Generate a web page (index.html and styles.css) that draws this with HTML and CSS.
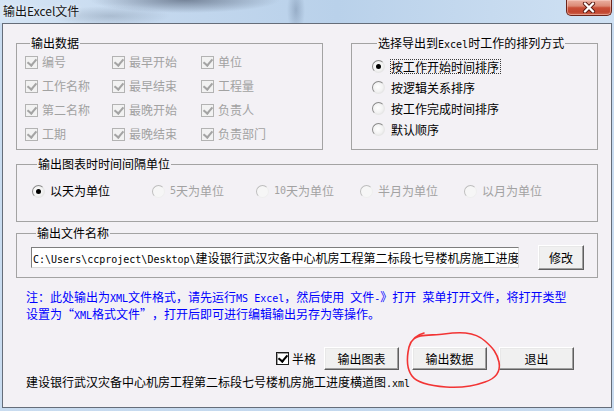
FILE: index.html
```html
<!DOCTYPE html>
<html lang="zh-CN">
<head>
<meta charset="utf-8">
<title>输出Excel文件</title>
<link rel="stylesheet" href="styles.css">
</head>
<body>
<div class="window">
  <div class="titlebar">
    <span class="title">输出Excel文件</span>
    <div class="close">
      <svg width="16" height="11" viewBox="0 0 16 11">
        <path d="M4 1.5 L12 9.5 M12 1.5 L4 9.5" stroke="#5a1a12" stroke-width="4.2" stroke-linecap="round"/>
        <path d="M4 1.5 L12 9.5 M12 1.5 L4 9.5" stroke="#ffffff" stroke-width="2.4" stroke-linecap="round"/>
      </svg>
    </div>
  </div>
  <div class="client">
    <div class="top-row">
      <fieldset class="grp grp-data">
        <legend>输出数据</legend>
        <div class="check-grid">
          <label class="item off"><span class="cb"></span>编号</label>
          <label class="item off"><span class="cb"></span>最早开始</label>
          <label class="item off"><span class="cb"></span>单位</label>
          <label class="item off"><span class="cb"></span>工作名称</label>
          <label class="item off"><span class="cb"></span>最早结束</label>
          <label class="item off"><span class="cb"></span>工程量</label>
          <label class="item off"><span class="cb"></span>第二名称</label>
          <label class="item off"><span class="cb"></span>最晚开始</label>
          <label class="item off"><span class="cb"></span>负责人</label>
          <label class="item off"><span class="cb"></span>工期</label>
          <label class="item off"><span class="cb"></span>最晚结束</label>
          <label class="item off"><span class="cb"></span>负责部门</label>
        </div>
      </fieldset>
      <fieldset class="grp grp-sort">
        <legend>选择导出到<span class="en">Excel</span>时工作的排列方式</legend>
        <div class="radio-list">
          <label class="item"><span class="rd sel"></span><span class="lbl focus">按工作开始时间排序</span></label>
          <label class="item"><span class="rd"></span><span class="lbl">按逻辑关系排序</span></label>
          <label class="item"><span class="rd"></span><span class="lbl">按工作完成时间排序</span></label>
          <label class="item"><span class="rd"></span><span class="lbl">默认顺序</span></label>
        </div>
      </fieldset>
    </div>
    <fieldset class="grp grp-unit">
      <legend>输出图表时时间间隔单位</legend>
      <div class="radio-row">
        <label class="item first"><span class="rd sel"></span>以天为单位</label>
        <label class="item off"><span class="rd"></span><span class="en">5</span>天为单位</label>
        <label class="item off"><span class="rd"></span><span class="en">10</span>天为单位</label>
        <label class="item off"><span class="rd"></span>半月为单位</label>
        <label class="item off"><span class="rd"></span>以月为单位</label>
      </div>
    </fieldset>
    <fieldset class="grp grp-file">
      <legend>输出文件名称</legend>
      <div class="file-row">
        <div class="edit"><span class="en">C:\Users\ccproject\Desktop\</span>建设银行武汉灾备中心机房工程第二标段七号楼机房施工进度</div>
        <button class="btn btn-small">修改</button>
      </div>
    </fieldset>
    <p class="note">注：此处输出为<span class="en">XML</span>文件格式，请先运行<span class="en">MS Excel</span>，然后使用<span class="en"> </span>文件<span class="en">-</span>》打开<span class="en"> </span>菜单打开文件，将打开类型<br>设置为<span class="q ql">“</span><span class="en">XML</span>格式文件<span class="q qr">”</span>，打开后即可进行编辑输出另存为等操作。</p>
    <div class="actions">
      <label class="item half"><span class="cb on"></span>半格</label>
      <button class="btn btn-chart">输出图表</button>
      <button class="btn btn-data">输出数据</button>
      <button class="btn btn-exit">退出</button>
    </div>
    <div class="filename">建设银行武汉灾备中心机房工程第二标段七号楼机房施工进度横道图<span class="en">.xml</span></div>
  </div>
  <svg class="annot" width="614" height="411" viewBox="0 0 614 411">
    <path d="M412 341 C418 333, 432 336, 444 334 C458 332, 474 331, 485 341 C493 348, 497 353, 499 362 C501 373, 494 379, 485 382 C474 386, 460 388, 446 387 C432 386, 418 384, 412 376 C406 368, 407 356, 409 347 C411 340, 416 335, 424 333"
      fill="none" stroke="#f23434" stroke-width="1.6" stroke-linecap="round"/>
  </svg>
</div>
</body>
</html>
```

FILE: styles.css
```css
* { box-sizing: border-box; }
html, body { margin: 0; padding: 0; }
body {
  width: 614px;
  height: 411px;
  overflow: hidden;
  font-family: "Noto Sans CJK SC", "Noto Sans", sans-serif;
  font-size: 12px;
  color: #000;
}
.window {
  position: relative;
  width: 614px;
  height: 411px;
  display: flex;
  flex-direction: column;
  background: linear-gradient(90deg, #c9dcf0 0, #c3d8ee 50%, #c9dcf0 100%);
}
.titlebar {
  height: 23px;
  flex: none;
  display: flex;
  justify-content: space-between;
  align-items: flex-start;
  background:
    radial-gradient(ellipse 95px 13px at 185px 0px, rgba(55, 65, 85, 0.55), rgba(55, 65, 85, 0) 100%),
    radial-gradient(ellipse 9px 24px at 296px 10px, rgba(70, 90, 120, 0.3), rgba(70, 90, 120, 0) 100%),
    radial-gradient(ellipse 60px 10px at 110px 16px, rgba(80, 95, 115, 0.25), rgba(80, 95, 115, 0) 100%),
    linear-gradient(90deg, #d5e5f5 0, #c4d8ee 25%, #b9d1ea 55%, #c6daef 80%, #cfe1f3 100%);
}
.title {
  padding-left: 3px;
  line-height: 21px;
  font-size: 12px;
  color: #151515;
  text-shadow: 0 0 5px rgba(255, 255, 255, 0.9);
}
.close {
  width: 46px;
  height: 16px;
  margin-right: 2px;
  border: 1px solid #6b2419;
  border-top: none;
  border-radius: 0 0 5px 5px;
  background: linear-gradient(#eab0a2 0, #dc8a76 40%, #c94f38 52%, #c2452f 80%, #d06a52 100%);
  box-shadow: inset 0 0 0 1px rgba(255, 220, 210, 0.45);
  display: flex;
  align-items: center;
  justify-content: center;
}
.client {
  margin-left: 2px;
  width: 610px;
  height: 385px;
  border: 1px solid #656d79;
  background: #f3f1f5;
  padding: 12px 13px 0 13px;
  display: flex;
  flex-direction: column;
}
.top-row {
  display: flex;
  gap: 28px;
}
.grp {
  margin: 0;
  padding: 0;
  border: 1px solid #a3a3a3;
  min-width: 0;
}
.grp legend {
  margin-left: 5px;
  padding: 0 1px;
  height: 14px;
  line-height: 14px;
  font-size: 12px;
  white-space: nowrap;
}
.en {
  font-family: "DejaVu Sans Mono", "Liberation Mono", monospace;
  font-size: 10px;
}
.item {
  display: flex;
  align-items: center;
  white-space: nowrap;
  line-height: 14px;
}
.item.off { color: #a2a2a2; }

/* checkboxes */
.cb {
  position: relative;
  flex: none;
  width: 13px;
  height: 13px;
  margin-right: 4px;
  border: 1px solid #8e8f8f;
  background: linear-gradient(135deg, #dedede, #fbfbfb);
  color: #000;
}
.cb::after {
  content: "";
  position: absolute;
  left: 3px;
  top: 0px;
  width: 4px;
  height: 7px;
  border: solid currentColor;
  border-width: 0 2px 2px 0;
  transform: rotate(40deg);
}
.off .cb {
  border-color: #b3b3b3;
  background: #f2f2f2;
  color: #a4a4a4;
}
.cb.on {
  border-color: #1c1c1c;
  background: #fff;
  box-shadow: inset 1px 1px 0 #a0a0a0;
}

/* radios */
.rd {
  position: relative;
  flex: none;
  width: 13px;
  height: 13px;
  margin-right: 5px;
  border-radius: 50%;
  border: 1px solid #8a8a8a;
  border-bottom-color: #e6e6e6;
  border-right-color: #e6e6e6;
  background: radial-gradient(circle at 45% 45%, #ffffff 0, #f2f2f2 55%, #dcdcdc 100%);
}
.rd.sel::after {
  content: "";
  position: absolute;
  left: 3px;
  top: 3px;
  width: 5px;
  height: 5px;
  border-radius: 50%;
  background: #000;
}
.off .rd {
  border-color: #bdbdbd #eeeeee #eeeeee #bdbdbd;
  background: #f6f6f6;
}

/* group 1 */
.grp-data {
  width: 307px;
  height: 114px;
  padding: 0 0 3px 8px;
}
.check-grid {
  display: grid;
  grid-template-columns: 87px 89px 1fr;
  grid-auto-rows: 24px;
}

/* group 2 */
.grp-sort {
  width: 247px;
  height: 114px;
  padding: 6px 0 9px 20px;
}
.radio-list {
  display: flex;
  flex-direction: column;
}
.radio-list .item { height: 21px; }
.radio-list .rd { margin-right: 5px; }
.lbl {
  border: 1px dotted transparent;
  padding: 0 1px 0 0;
  line-height: 13px;
}
.lbl.focus { border-color: #3a3a3a; }

/* group 3 */
.grp-unit {
  margin-top: 7px;
  height: 65px;
  padding: 10px 0 20px 15px;
}
.radio-row {
  display: flex;
  height: 20px;
}
.radio-row .item { width: 104px; }
.radio-row .item.first { width: 120px; }

/* group 4 */
.grp-file {
  margin-top: 4px;
  height: 52px;
  padding: 5px 0 7px 14px;
}
.file-row {
  display: flex;
  align-items: center;
  height: 25px;
  gap: 19px;
}
.edit {
  width: 488px;
  height: 21px;
  border: 1px solid #7d7d7d;
  border-right-color: #d9d9d9;
  border-bottom-color: #d9d9d9;
  background: #fff;
  padding-left: 1px;
  line-height: 19px;
  white-space: nowrap;
  overflow: hidden;
}
.btn {
  font-family: "Noto Sans CJK SC", "Noto Sans", sans-serif;
  font-size: 12px;
  color: #000;
  height: 23px;
  width: 75px;
  padding: 0;
  border: 1px solid;
  border-color: #ffffff #5f5f5f #5f5f5f #ffffff;
  box-shadow: inset -1px -1px 0 #a0a0a0, inset 1px 1px 0 #e8e8e8;
  background: #f0f0f0;
  border-radius: 0;
  line-height: 20px;
}
.btn-small {
  width: 46px;
  height: 25px;
}

/* note */
.note {
  margin: 11px 0 0 10px;
  line-height: 15px;
  color: #0000ff;
  white-space: nowrap;
}
.q {
  display: inline-block;
  width: 12px;
}
.ql { text-align: right; }
.qr { text-align: left; }

/* actions */
.actions {
  margin-top: 24px;
  display: flex;
  align-items: center;
  justify-content: flex-end;
  padding-right: 24px;
}
.half { margin-right: 8px; }
.half .cb { margin-right: 3px; }
.btn-data { margin-left: 13px; }
.btn-exit { margin-left: 12px; }

.filename {
  margin: 5px 0 0 10px;
  line-height: 14px;
  white-space: nowrap;
}

.annot {
  position: absolute;
  left: 0;
  top: 0;
  pointer-events: none;
}
```
